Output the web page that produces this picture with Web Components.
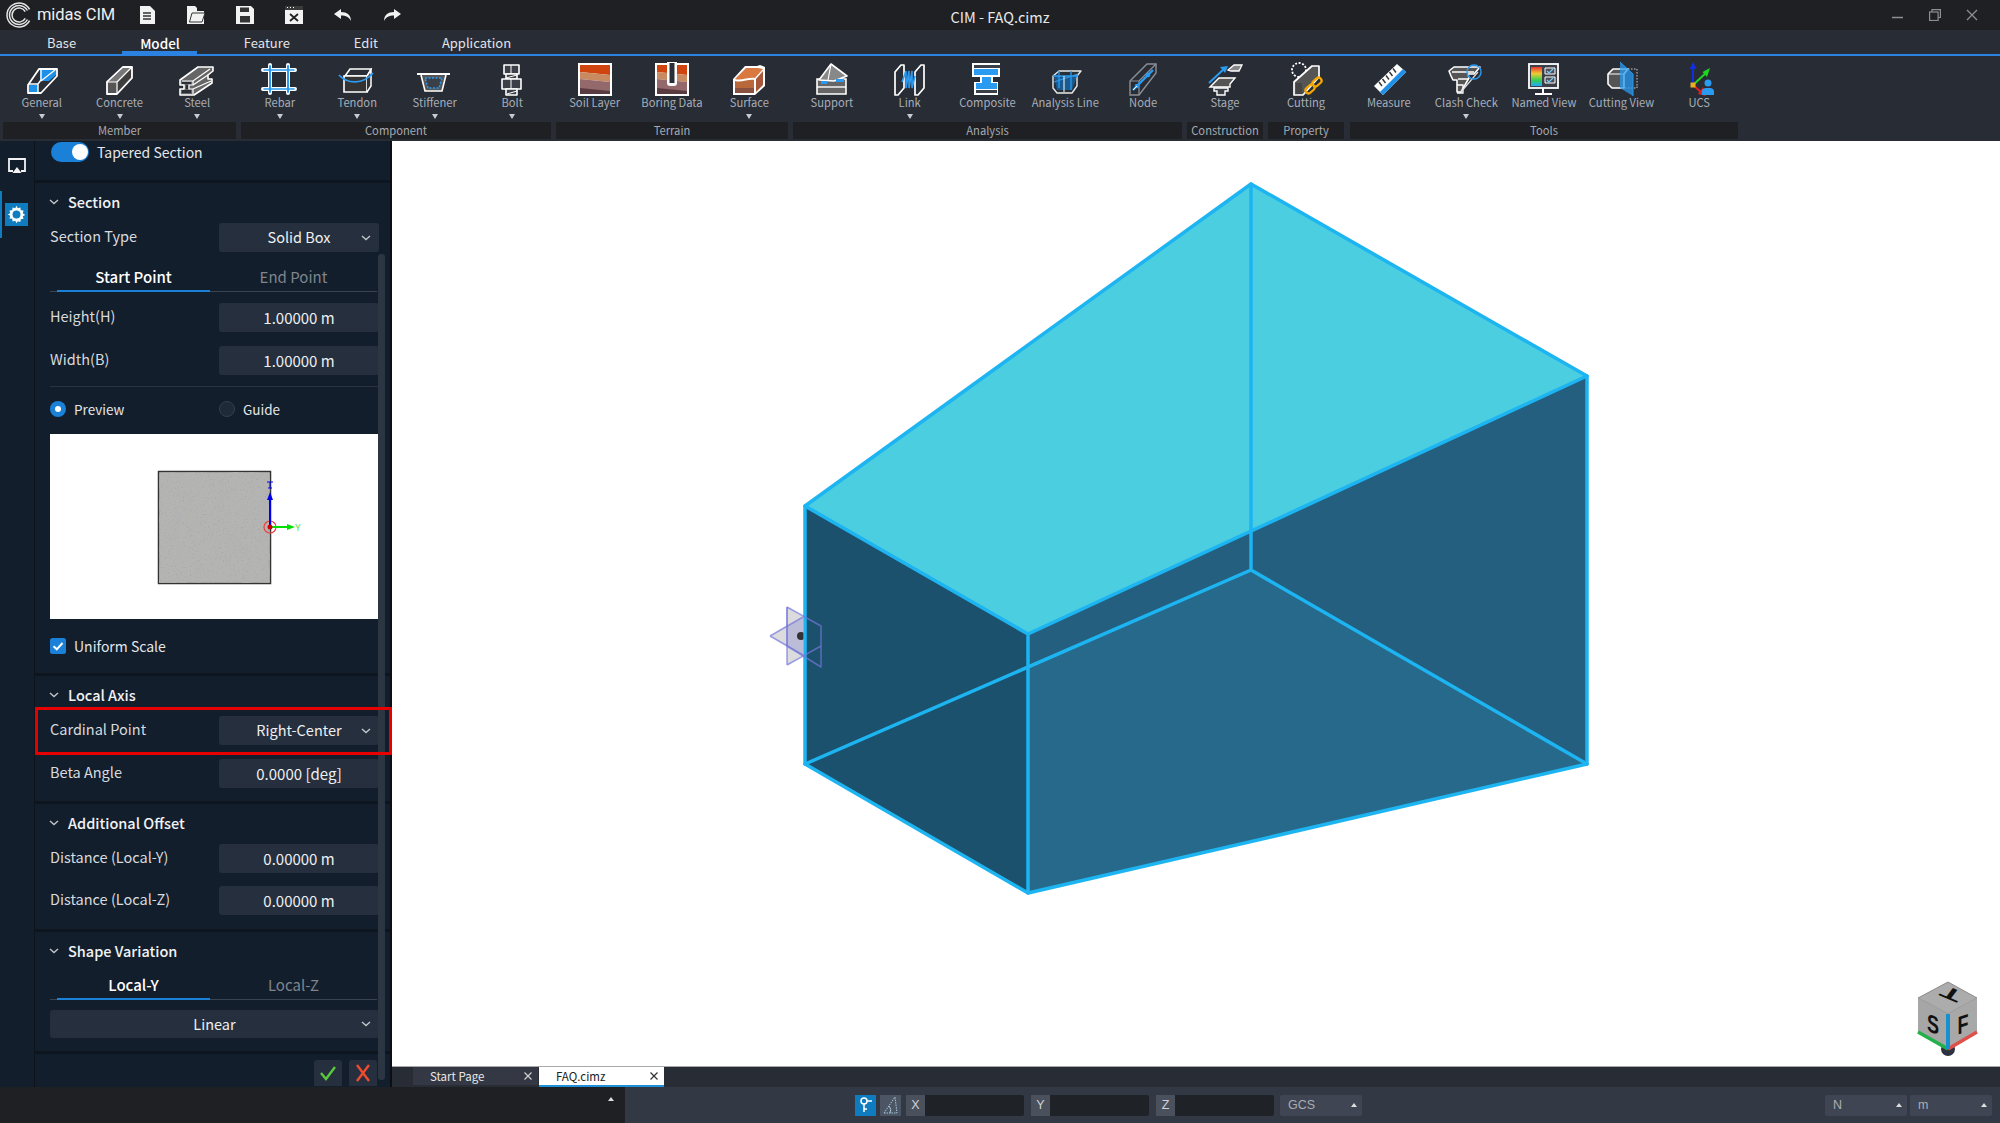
<!DOCTYPE html>
<html>
<head>
<meta charset="utf-8">
<title>midas CIM</title>
<style>
  html, body { margin: 0; padding: 0; background: #1e2024; }
  body { width: 2000px; height: 1123px; overflow: hidden; display: flex; flex-direction: column;
         font-family: "Noto Sans CJK KR", "Noto Sans", sans-serif; color: #e6e8ea; }
  #main { display: flex; height: 946px; }
  #work { flex: 1; display: flex; flex-direction: column; min-width: 0; }
</style>
</head>
<body>
<cim-titlebar title-text="CIM - FAQ.cimz"></cim-titlebar>
<cim-menu>
  <menu-tab>Base</menu-tab>
  <menu-tab active>Model</menu-tab>
  <menu-tab>Feature</menu-tab>
  <menu-tab>Edit</menu-tab>
  <menu-tab>Application</menu-tab>
</cim-menu>
<cim-ribbon>
  <rib-group label="Member" style="margin-left:3px;width:233px">
    <rib-item label="General" icon="general" drop></rib-item>
    <rib-item label="Concrete" icon="concrete" drop></rib-item>
    <rib-item label="Steel" icon="steel" drop></rib-item>
  </rib-group>
  <rib-group label="Component" style="width:310px">
    <rib-item label="Rebar" icon="rebar" drop></rib-item>
    <rib-item label="Tendon" icon="tendon" drop></rib-item>
    <rib-item label="Stiffener" icon="stiffener" drop></rib-item>
    <rib-item label="Bolt" icon="bolt" drop></rib-item>
  </rib-group>
  <rib-group label="Terrain" style="width:232px">
    <rib-item label="Soil Layer" icon="soil"></rib-item>
    <rib-item label="Boring Data" icon="boring"></rib-item>
    <rib-item label="Surface" icon="surface" drop></rib-item>
  </rib-group>
  <rib-group label="Analysis" style="width:389px">
    <rib-item label="Support" icon="support"></rib-item>
    <rib-item label="Link" icon="link" drop></rib-item>
    <rib-item label="Composite" icon="composite"></rib-item>
    <rib-item label="Analysis Line" icon="analysis"></rib-item>
    <rib-item label="Node" icon="node"></rib-item>
  </rib-group>
  <rib-group label="Construction" style="width:76px">
    <rib-item label="Stage" icon="stage"></rib-item>
  </rib-group>
  <rib-group label="Property" style="width:76px">
    <rib-item label="Cutting" icon="cutting"></rib-item>
  </rib-group>
  <rib-group label="Tools" style="width:388px;margin-left:1px">
    <rib-item label="Measure" icon="measure"></rib-item>
    <rib-item label="Clash Check" icon="clash" drop></rib-item>
    <rib-item label="Named View" icon="named"></rib-item>
    <rib-item label="Cutting View" icon="cutview"></rib-item>
    <rib-item label="UCS" icon="ucs"></rib-item>
  </rib-group>
</cim-ribbon>
<div id="main">
  <cim-rail></cim-rail>
  <cim-panel>
    <prop-toggle label="Tapered Section"></prop-toggle>
    <prop-section header="Section" pad="13">
      <prop-select label="Section Type" value="Solid Box"></prop-select>
      <prop-tabs a="Start Point" b="End Point" style="margin-top:11px"></prop-tabs>
      <prop-field label="Height(H)" value="1.00000 m" style="margin-top:11px"></prop-field>
      <prop-field label="Width(B)" value="1.00000 m" style="margin-top:14px"></prop-field>
      <prop-rule></prop-rule>
      <prop-radios></prop-radios>
      <section-preview></section-preview>
      <prop-check label="Uniform Scale"></prop-check>
    </prop-section>
    <prop-section header="Local Axis" pad="13">
      <prop-select label="Cardinal Point" value="Right-Center"></prop-select>
      <prop-field label="Beta Angle" value="0.0000 [deg]" style="margin-top:14px"></prop-field>
    </prop-section>
    <prop-section header="Additional Offset" pad="14">
      <prop-field label="Distance (Local-Y)" value="0.00000 m"></prop-field>
      <prop-field label="Distance (Local-Z)" value="0.00000 m" style="margin-top:13px"></prop-field>
    </prop-section>
    <prop-section header="Shape Variation" pad="13" nogap>
      <prop-tabs a="Local-Y" b="Local-Z" style="margin-top:8px"></prop-tabs>
      <prop-select value="Linear" style="margin-top:10px"></prop-select>
    </prop-section>
    <prop-actions></prop-actions>
  </cim-panel>
  <div id="work">
    <cim-viewport><view-cube></view-cube></cim-viewport>
    <cim-doctabs>
      <doc-tab>Start Page</doc-tab>
      <doc-tab active>FAQ.cimz</doc-tab>
    </cim-doctabs>
  </div>
</div>
<cim-status></cim-status>

<script>
const FONT = '"Noto Sans CJK KR", "Noto Sans", sans-serif';
const CHEVRON = '<svg width="10" height="6" viewBox="0 0 10 6"><path d="M1 1l4 3.6L9 1" fill="none" stroke="#c4c8cc" stroke-width="1.3"/></svg>';

// ribbon icons, 36x36, centred on the item
const ICONS = {
  general: `<path d="M4 23L15 7H33V14L17 31H4Z" fill="#2a2e37" stroke="#fff" stroke-width="1.8" stroke-linejoin="round"/>
    <path d="M16 8H32V13L25 19H16Z" fill="#1e90e8"/><path d="M31 8L17 19" stroke="#fff" stroke-width="1.2"/>
    <rect x="5" y="23" width="9" height="7" fill="#1e90e8"/>
    <path d="M4 22H14V31M14 22L17 18V8" fill="none" stroke="#fff" stroke-width="1.4"/>`,
  concrete: `<path d="M5 20L21 5H30V16L15 32H5Z" fill="#555" stroke="#fff" stroke-width="1.8" stroke-linejoin="round"/>
    <path d="M6 20L21 6H29L15 20Z" fill="#777"/><path d="M15 21L29 7V15L15 30Z" fill="#3d3d3d"/>
    <path d="M5 20H15V32M15 20L30 5" fill="none" stroke="#fff" stroke-width="1.2"/>`,
  steel: `<path d="M1 18L19 5H34V9L29 13V17L33 17V21L15 33H1V27H5V23H1Z" fill="#666" stroke="#fff" stroke-width="1.6" stroke-linejoin="round"/>
    <path d="M3 19H14L31 7M14 19V23H10V27H14V32M14 23L29 13M14 27L32 19" fill="none" stroke="#fff" stroke-width="1.2"/>
    <rect x="3" y="20" width="9" height="2" fill="#2a2e37"/><rect x="7" y="23" width="2" height="4" fill="#2a2e37"/><rect x="3" y="28" width="9" height="3" fill="#2a2e37"/>`,
  rebar: `<g fill="none" stroke-linecap="round"><path d="M8 3V31M26 3V31M1 8H33M1 27H33" stroke="#fff" stroke-width="4"/>
    <path d="M8 4V30M26 4V30" stroke="#2a9bf0" stroke-width="2"/><path d="M2 8H32M2 27H32" stroke="#2a9bf0" stroke-width="1.6"/></g>`,
  tendon: `<path d="M6 14L11 7H32L28 14Z" fill="#2a2e37" stroke="#fff" stroke-width="1.5"/>
    <path d="M5 14H28V30H5Z" fill="#333" stroke="#fff" stroke-width="1.6"/><path d="M28 14L32 8V24L28 30" fill="#333" stroke="#fff" stroke-width="1.5"/>
    <path d="M0 13C8 22 24 23 34 11" fill="none" stroke="#2a9bf0" stroke-width="1.8"/>`,
  stiffener: `<path d="M0 12H33" stroke="#fff" stroke-width="2"/><path d="M4 13L8 29H25L29 13" fill="#555" stroke="#fff" stroke-width="1.6"/>
    <path d="M8 16H25L22 26H11Z" fill="#3a3f48" stroke="#2a9bf0" stroke-width="1.5" stroke-dasharray="2 1.5"/>`,
  bolt: `<g fill="#3b3f47" stroke="#fff" stroke-width="1.6" stroke-linejoin="round"><path d="M10 3H25V12H10Z"/><path d="M12 12H23V17H12Z"/><path d="M8 17H27V27H8Z"/><path d="M12 27H23V33H12Z"/></g>
    <path d="M17 3V12M12 16L23 13M13 32L23 29" stroke="#fff" stroke-width="1"/><path d="M17 17V27" stroke="#fff" stroke-width="1"/>`,
  soil: `<rect x="1" y="1" width="34" height="33" fill="#fff"/><path d="M3 3H33V13L3 10Z" fill="#d0450f"/><path d="M3 10L33 13V20L3 17Z" fill="#c98a5f"/>
    <path d="M3 17L33 20V30L3 27Z" fill="#94696b"/><path d="M3 26L33 29V32H3Z" fill="#5b3b42"/>`,
  boring: `<rect x="1" y="1" width="34" height="33" fill="#fff"/><path d="M3 3H33V13L3 10Z" fill="#d0450f"/><path d="M3 10L33 13V20L3 17Z" fill="#c98a5f"/>
    <path d="M3 17L33 20V30L3 27Z" fill="#94696b"/><path d="M3 26L33 29V32H3Z" fill="#5b3b42"/>
    <path d="M13 0H23V21a3 3 0 0 1-3 3H16a3 3 0 0 1-3-3Z" fill="#fff"/><path d="M15.500 1H20.500V21H15.500Z" fill="#2a2e37"/>`,
  surface: `<path d="M2 17L14 4H26L29 3L34 5V24L24 33H2Z" fill="#fff"/>
    <path d="M4 17L15 6H27L32 7L24 16C18 15 10 19 4 17Z" fill="#d9793f"/><path d="M4 19C10 21 18 17 23 18V31H4Z" fill="#b8683a"/>
    <path d="M25 17L32 9V23L25 30Z" fill="#a8583a"/><path d="M4 26H23V31H4Z" fill="#8a5040"/>`,
  support: `<path d="M3 18H32V33H3Z" fill="#666" stroke="#fff" stroke-width="1.6" transform="translate(0 -1)"/><path d="M3 25H32" stroke="#fff" stroke-width="1.4"/>
    <path d="M5 18L17 2 33 14 20 19Z" fill="#888" stroke="#fff" stroke-width="1.6" stroke-linejoin="round"/><path d="M17 2L14 18" stroke="#fff" stroke-width="1.2"/>
    <path d="M7 19H13V22H7ZM22 17H30V20H22Z" fill="#2a9bf0"/>`,
  link: `<g fill="#2a2e37" stroke="#fff" stroke-width="1.7" stroke-linejoin="round"><path d="M3 10L9 3H12V26L6 33H3Z"/><path d="M23 10L29 3H32V26L26 33H23Z"/></g>
    <path d="M10 20L14 9V26L17 9V26L20 9V26L23 14" fill="none" stroke="#2a9bf0" stroke-width="1.6"/>`,
  composite: `<path d="M3 1H31V15H24V20H29V33H5V20H11V15H3Z" fill="#fff"/><rect x="5" y="3" width="26" height="3" fill="#3a3f48"/><rect x="5" y="7" width="24" height="6" fill="#2a9bf0"/>
    <path d="M13 15H22V21H28V27H7V21H13Z" fill="#2a9bf0"/><rect x="7" y="28" width="21" height="3" fill="#3a3f48"/>`,
  analysis: `<path d="M6 14L12 9H34L30 14V24L25 31H10L6 26Z" fill="#2a3038" stroke="#e8e8e8" stroke-width="1.4" stroke-linejoin="round"/>
    <path d="M7 14H30L25 28H10Z" fill="#1565a8" opacity=".8"/><path d="M12 9V26M24 9V28M6 14H31M7 20L31 12" stroke="#2a9bf0" stroke-width="1.3" fill="none"/><path d="M17 14V30" stroke="#fff"/>`,
  node: `<path d="M5 19L22 2H31V11L14 33H5Z" fill="none" stroke="#8b8f96" stroke-width="1.4"/><path d="M5 19H14V33M14 19L31 2" fill="none" stroke="#8b8f96" stroke-width="1.2"/>
    <path d="M8 28L28 8" stroke="#2a9bf0" stroke-width="2.4"/><circle cx="12" cy="24" r="2.300" fill="#2a9bf0"/><circle cx="23" cy="13" r="2.300" fill="#2a9bf0"/><path d="M8 28L12 24" stroke="#fff"/>`,
  stage: `<path d="M21 8L27 3H35L32 9H24Z" fill="#888" stroke="#fff" stroke-width="1.3"/>
    <path d="M3 25L12 16H28L23 22V25Z" fill="#555" stroke="#fff" stroke-width="1.4"/><path d="M7 26H21V29H18V33H10V29H7Z" fill="#3a3f48" stroke="#fff" stroke-width="1.4"/>
    <path d="M2 21L18 6" stroke="#2a9bf0" stroke-width="2"/><path d="M13 5L21 4 18 11Z" fill="#2a9bf0"/>`,
  cutting: `<circle cx="11" cy="8" r="7" fill="none" stroke="#fff" stroke-width="1.8" stroke-dasharray="2 1.6"/>
    <path d="M6 20L24 4H31V15L15 33H6Z" fill="#555" stroke="#fff" stroke-width="1.7" stroke-linejoin="round"/><path d="M8 21H14V32H8Z" fill="#444"/>
    <g fill="none" stroke="#f5a800" stroke-width="2.200"><rect x="24" y="17" width="10" height="6" rx="3" transform="rotate(-40 29 20)"/><rect x="17" y="24" width="10" height="6" rx="3" transform="rotate(-40 22 27)"/></g>`,
  measure: `<path d="M3 24L26 2 35 10 12 33Z" fill="#fff"/><path d="M9 30L32 7 35 10 12 33Z" fill="#1e90e8"/>
    <path d="M8 20L11 24M11.500 17L14.500 21M15 13.500L18 17.500M18.500 10L21.500 14M22 6.500L25 10.500" stroke="#333" stroke-width="1.4"/>`,
  clash: `<path d="M1 9L6 5H32L26 12H20L21 16 13 30H9V18H5L3 14Z" fill="#555" stroke="#fff" stroke-width="1.6" stroke-linejoin="round"/>
    <path d="M4 10H26M10 17H20M9 23H15V31H9" fill="none" stroke="#fff" stroke-width="1.3"/><path d="M13 30L30 10" stroke="#ddd" stroke-width="1.2"/>
    <circle cx="26" cy="10" r="7" fill="none" stroke="#2a9bf0" stroke-width="1.4"/>`,
  named: `<rect x="3" y="2" width="29" height="24" fill="#3a3f48" stroke="#fff" stroke-width="1.8"/>
    <defs><linearGradient id="rb" x1="0" y1="0" x2="0" y2="1"><stop offset="0" stop-color="#e33"/><stop offset=".35" stop-color="#ec3"/><stop offset=".7" stop-color="#3c5"/><stop offset="1" stop-color="#2af"/></linearGradient></defs>
    <rect x="5" y="5" width="11" height="19" fill="url(#rb)"/><path d="M19 6h10v6H19zM19 15h10v6H19z" fill="#4c5058" stroke="#fff"/><path d="M21 9l2 2 4-4M21 18l2 2 4-4" fill="none" stroke="#7cf" stroke-width="1.2"/>
    <path d="M17 26V31M9 32H26" stroke="#fff" stroke-width="2"/>`,
  cutview: `<path d="M4 12L9 7H24L20 12V26H8L4 22Z" fill="#555" stroke="#fff" stroke-width="1.6" stroke-linejoin="round"/><path d="M4 12H20" stroke="#fff"/>
    <path d="M24 7H33V24" fill="none" stroke="#ccc" stroke-dasharray="1.500 1.500"/><path d="M21 26H33V24" fill="none" stroke="#ccc" stroke-dasharray="1.500 1.500"/>
    <path d="M16 0L29 12V34L16 26Z" fill="#2a9bf0" opacity=".75"/><path d="M16 0L29 12V34" fill="none" stroke="#2a9bf0"/>`,
  ucs: `<path d="M12 23V4" stroke="#1030e0" stroke-width="2"/><path d="M12 0L8.500 7H15.500Z" fill="#1030e0"/>
    <path d="M12 23L26 10" stroke="#1dd620" stroke-width="2"/><path d="M29 6L21.500 10 26 15Z" fill="#1dd620"/>
    <path d="M12 23L21 31" stroke="#e02020" stroke-width="2"/><path d="M25 34L17 32 22 25Z" fill="#e02020"/>
    <rect x="9.500" y="20.500" width="5" height="5" fill="#e8b020"/><circle cx="27" cy="21" r="3.500" fill="#2a9bf0"/><path d="M21 33V29a4 4 0 0 1 4-3H29a4 4 0 0 1 4 3V33Z" fill="#2a9bf0"/>`
};

class CimTitlebar extends HTMLElement {
  constructor() {
    super();
    this.attachShadow({ mode: "open" });
  }
  connectedCallback() {
    this.shadowRoot.innerHTML = `
      <style>
        :host { display: flex; align-items: center; height: 30px; background: #1e2024; position: relative; font-family: ${FONT}; color: #e8e8e8; flex: none; }
        .logo { margin-left: 6px; display: block; }
        .name { font: 400 16.500px/30px Roboto, sans-serif; margin-left: 5px; width: 78px; color: #eee; white-space: nowrap; letter-spacing: -.1px; }
        .tools { display: flex; margin-left: 24px; gap: 31px; align-items: center; }
        .title { text-align: center; font-size: 14.500px; line-height: 30px; position: absolute; left: 0; right: 0; top: 2px; }
        .win { margin-left: auto; display: flex; gap: 25px; padding-right: 22px; align-items: center; position: relative; }
      </style>
      <svg class="logo" width="26" height="26" viewBox="0 0 26 26" fill="none" stroke="#e4e4e4" stroke-width="1.500">
        <path d="M23.600 7.400A12 12 0 1 0 23.600 18.600"/><path d="M21.400 8.500A9.500 9.500 0 1 0 21.400 17.500"/><path d="M19.200 9.700A7 7 0 1 0 19.200 16.300"/>
      </svg>
      <span class="name">midas CIM</span>
      <div class="tools">
        <svg width="17" height="18" viewBox="0 0 17 18"><path d="M1 0H11L16 5V18H1Z" fill="#f2f2f2"/><path d="M4 7H12M4 10H12M4 13H12" stroke="#333" stroke-width="1.300"/></svg>
        <svg width="18" height="18" viewBox="0 0 18 18"><path d="M0 0H8L10 2V5H17V18H0Z" fill="#f2f2f2"/><path d="M2.500 16L5 7H18L15 16Z" fill="#f2f2f2" stroke="#333"/></svg>
        <svg width="18" height="18" viewBox="0 0 18 18"><path d="M0 0H15L18 3V18H0Z" fill="#f2f2f2"/><rect x="4" y="1.500" width="9" height="4.500" fill="#333"/><rect x="4" y="10" width="10" height="6.500" fill="#333"/></svg>
        <svg width="18" height="18" viewBox="0 0 18 18"><rect width="18" height="18" fill="#f2f2f2"/><rect width="18" height="4" fill="#3a3a3a"/><path d="M2 1.500h1M5 1.500h1M8 1.500h1" stroke="#fff"/><path d="M5 8L13 15M13 8L5 15" stroke="#222" stroke-width="1.800"/></svg>
        <svg width="18" height="12" viewBox="0 0 18 12"><path d="M7 0L0 5 7 10V6.500C12 6.500 15 8 17 12 17 6 13 3 7 3Z" fill="#f2f2f2"/></svg>
        <svg width="18" height="12" viewBox="0 0 18 12"><path d="M11 0L18 5 11 10V6.500C6 6.500 3 8 1 12 1 6 5 3 11 3Z" fill="#f2f2f2"/></svg>
      </div>
      <div class="title">${this.getAttribute("title-text")}</div>
      <div class="win">
        <svg width="12" height="12" viewBox="0 0 12 12"><path d="M0 8.500H11" stroke="#8d8f92" stroke-width="1.500"/></svg>
        <svg width="12" height="12" viewBox="0 0 12 12" fill="none" stroke="#8d8f92" stroke-width="1.200"><rect x=".6" y="3" width="8.500" height="8.500"/><path d="M3 3V.6H11.400V8.500H9"/></svg>
        <svg width="12" height="12" viewBox="0 0 12 12"><path d="M1 1L11 11M11 1L1 11" stroke="#8d8f92" stroke-width="1.300"/></svg>
      </div>`;
  }
}
customElements.define("cim-titlebar", CimTitlebar);

class CimMenu extends HTMLElement {
  constructor() {
    super();
    this.attachShadow({ mode: "open" }).innerHTML = `
      <style>
        :host { display: flex; height: 24px; background: #282c35; border-bottom: 2px solid #2b82e0; padding-left: 47px; gap: 64px; flex: none; }
      </style>
      <slot></slot>`;
  }
}
customElements.define("cim-menu", CimMenu);

class MenuTab extends HTMLElement {
  constructor() {
    super();
    this.attachShadow({ mode: "open" }).innerHTML = `
      <style>
        :host { display: block; position: relative; font: 400 13px/26px ${FONT}; color: #e2e4e8; }
        :host([active]) { font-weight: 500; color: #fff; font-size: 13.500px; }
        :host([active])::after { content: ""; position: absolute; left: -18px; right: -17px; bottom: 0; height: 3px; background: #2b82e0; }
      </style>
      <slot></slot>`;
  }
}
customElements.define("menu-tab", MenuTab);

class CimRibbon extends HTMLElement {
  constructor() {
    super();
    this.attachShadow({ mode: "open" }).innerHTML = `
      <style>
        :host { display: flex; height: 85px; background: #282c35; flex: none; gap: 5px; }
      </style>
      <slot></slot>`;
  }
}
customElements.define("cim-ribbon", CimRibbon);

class RibGroup extends HTMLElement {
  constructor() {
    super();
    this.attachShadow({ mode: "open" });
  }
  connectedCallback() {
    this.shadowRoot.innerHTML = `
      <style>
        :host { display: flex; flex-direction: column; flex: none; }
        .items { display: flex; height: 66px; }
        .label { height: 17px; background: #1e2024; color: #a6aab2; font: 400 11.200px/17px ${FONT}; text-align: center; }
      </style>
      <div class="items"><slot></slot></div>
      <div class="label">${this.getAttribute("label")}</div>`;
  }
}
customElements.define("rib-group", RibGroup);

class RibItem extends HTMLElement {
  constructor() {
    super();
    this.attachShadow({ mode: "open" });
  }
  connectedCallback() {
    const drop = this.hasAttribute("drop") ? '<i class="arrow"></i>' : "";
    this.shadowRoot.innerHTML = `
      <style>
        :host { display: flex; flex-direction: column; align-items: center; flex: 1 1 0; min-width: 0; padding-top: 6px; }
        svg { display: block; overflow: visible; }
        .label { font: 400 11.200px/14px ${FONT}; color: #a6aeb8; white-space: nowrap; margin-top: -3px; }
        .arrow { width: 0; height: 0; border: 3px solid transparent; border-top: 5px solid #c8ccd2; border-bottom: 0; margin-top: 5px; }
      </style>
      <svg width="36" height="36" viewBox="0 0 36 36">${ICONS[this.getAttribute("icon")]}</svg>
      <span class="label">${this.getAttribute("label")}</span>${drop}`;
  }
}
customElements.define("rib-item", RibItem);

class CimRail extends HTMLElement {
  constructor() {
    super();
    this.attachShadow({ mode: "open" }).innerHTML = `
      <style>
        :host { display: flex; flex-direction: column; width: 34px; background: #131e2c; border-right: 1px solid #0c131c; flex: none; }
        .b { height: 47px; display: flex; align-items: center; justify-content: center; box-sizing: border-box; }
        .b.first { height: 50px; }
        .b.on { border-left: 2px solid #0f7cbf; padding-right: 3px; }
        .gear { width: 23px; height: 23px; background: #0f7cbf; display: flex; align-items: center; justify-content: center; }
      </style>
      <div class="b first"><svg width="18" height="17" viewBox="0 0 18 17"><path d="M5 13H1V1H17V13H13" fill="none" stroke="#f2f2f2" stroke-width="1.800"/><path d="M9 9L13.500 15H4.500Z" fill="#f2f2f2"/></svg></div>
      <div class="b on"><div class="gear"><svg width="19" height="19" viewBox="0 0 24 24">
        <path d="M12 2l1.600 3.100 3.300-1 .5 3.500 3.500.5-1 3.300L23 13.500l-3.100 1.600 1 3.300-3.500.5-.5 3.500-3.300-1L12 24l-1.600-3.100-3.300 1-.5-3.500-3.500-.5 1-3.300L1 13l3.100-1.600-1-3.300 3.500-.5.5-3.500 3.300 1Z" transform="translate(0 -1)" fill="#fff"/>
        <circle cx="12" cy="12" r="5" fill="#0f7cbf"/></svg></div></div>`;
  }
}
customElements.define("cim-rail", CimRail);

class CimPanel extends HTMLElement {
  constructor() {
    super();
    this.attachShadow({ mode: "open" }).innerHTML = `
      <style>
        :host { display: flex; flex-direction: column; width: 355px; background: #131e2c; border-right: 2px solid #0a0f15; position: relative; flex: none; color: #e4e6ea; font-family: ${FONT}; }
        .bar { position: absolute; left: 343px; top: 113px; bottom: 7px; width: 7px; background: #2c3642; border-radius: 3px; }
        .mark { position: absolute; left: 0; top: 566px; width: 357px; height: 48px; box-sizing: border-box; border: 3px solid #e60000; }
      </style>
      <slot></slot>
      <div class="bar"></div>
      <div class="mark"></div>`;
  }
}
customElements.define("cim-panel", CimPanel);

class PropToggle extends HTMLElement {
  constructor() {
    super();
    this.attachShadow({ mode: "open" });
  }
  connectedCallback() {
    this.shadowRoot.innerHTML = `
      <style>
        :host { display: flex; align-items: flex-start; height: 39px; padding: 1px 0 0 16px; box-sizing: border-box; font-size: 14px; line-height: 20px; }
        .sw { width: 38px; height: 20px; border-radius: 10px; background: #1a80d8; position: relative; margin-right: 8px; }
        .sw i { position: absolute; right: 1px; top: 2px; width: 16px; height: 16px; border-radius: 50%; background: #fff; }
      </style>
      <div class="sw"><i></i></div><span>${this.getAttribute("label")}</span>`;
  }
}
customElements.define("prop-toggle", PropToggle);

class PropSection extends HTMLElement {
  constructor() {
    super();
    this.attachShadow({ mode: "open" });
  }
  connectedCallback() {
    const pad = this.getAttribute("pad");
    const gap = this.hasAttribute("nogap") ? 0 : 9;
    this.shadowRoot.innerHTML = `
      <style>
        :host { display: block; border-top: 3px solid #0d151f; padding: 7px 13px ${pad}px 15px; }
        .head { display: flex; align-items: center; height: 24px; margin-bottom: ${gap}px; font: 500 14.500px/24px ${FONT}; color: #f0f2f4; }
        svg { margin-right: 9px; margin-left: -1px; }
      </style>
      <div class="head">${CHEVRON}<span>${this.getAttribute("header")}</span></div>
      <slot></slot>`;
  }
}
customElements.define("prop-section", PropSection);

class PropField extends HTMLElement {
  constructor() {
    super();
    this.attachShadow({ mode: "open" });
  }
  connectedCallback() {
    this.shadowRoot.innerHTML = `
      <style>
        :host { display: grid; grid-template-columns: 169px 160px; height: 29px; align-items: center; font-size: 14.500px; }
        .l { color: #d8dade; margin-top: -4px; white-space: nowrap; }
        .v { height: 29px; background: #262f3d; border-radius: 3px; text-align: center; line-height: 29px; color: #eef0f2; font-size: 15px; }
      </style>
      <span class="l">${this.getAttribute("label")}</span>
      <div class="v">${this.getAttribute("value")}</div>`;
  }
}
customElements.define("prop-field", PropField);

class PropSelect extends HTMLElement {
  constructor() {
    super();
    this.attachShadow({ mode: "open" });
  }
  connectedCallback() {
    const label = this.getAttribute("label");
    this.shadowRoot.innerHTML = `
      <style>
        :host { display: grid; grid-template-columns: ${label ? "169px 160px" : "329px"}; height: ${label ? 29 : 28}px; align-items: center; font-size: 14.500px; }
        .l { color: #d8dade; margin-top: -4px; white-space: nowrap; }
        .v { display: grid; grid-template-columns: 1fr auto 1fr; align-items: center; height: 100%; background: #262f3d; border-radius: 3px; color: #eef0f2; line-height: 1; }
        .v svg { justify-self: end; margin-right: 8px; }
      </style>
      ${label ? `<span class="l">${label}</span>` : ""}
      <div class="v"><span></span><span>${this.getAttribute("value")}</span>${CHEVRON}</div>`;
  }
}
customElements.define("prop-select", PropSelect);

class PropTabs extends HTMLElement {
  constructor() {
    super();
    this.attachShadow({ mode: "open" });
  }
  connectedCallback() {
    this.shadowRoot.innerHTML = `
      <style>
        :host { display: grid; grid-template-columns: 153px 167px; padding-left: 7px; height: 29px; box-sizing: border-box; width: 327px; border-bottom: 1px solid #3a4450; font: 400 15px/28px ${FONT}; text-align: center; }
        .a { color: #fff; font-weight: 500; height: 29px; box-sizing: border-box; border-bottom: 2px solid #1a80d8; }
        .b { color: #7f858d; }
      </style>
      <div class="a">${this.getAttribute("a")}</div>
      <div class="b">${this.getAttribute("b")}</div>`;
  }
}
customElements.define("prop-tabs", PropTabs);

class PropRule extends HTMLElement {
  constructor() {
    super();
    this.attachShadow({ mode: "open" }).innerHTML = `
      <style>:host { display: block; height: 1px; margin-top: 11px; background: #2a3441; width: 329px; }</style>`;
  }
}
customElements.define("prop-rule", PropRule);

class PropRadios extends HTMLElement {
  constructor() {
    super();
    this.attachShadow({ mode: "open" }).innerHTML = `
      <style>
        :host { display: grid; grid-template-columns: 169px 160px; height: 24px; margin-top: 10px; font-size: 13.500px; align-items: center; line-height: 20px; }
        label { display: flex; align-items: center; gap: 8px; }
        i { width: 16px; height: 16px; border-radius: 50%; box-sizing: border-box; }
        .on { background: #1a80d8; display: flex; align-items: center; justify-content: center; }
        .on::after { content: ""; width: 6px; height: 6px; border-radius: 50%; background: #fff; }
        .off { background: #1f2a38; border: 1px solid #333f4e; }
      </style>
      <label><i class="on"></i>Preview</label>
      <label><i class="off"></i>Guide</label>`;
  }
}
customElements.define("prop-radios", PropRadios);

class SectionPreview extends HTMLElement {
  constructor() {
    super();
    this.attachShadow({ mode: "open" }).innerHTML = `
      <style>:host { display: block; width: 329px; height: 185px; margin-top: 13px; background: #fff; } svg { display: block; }</style>
      <svg width="329" height="185" viewBox="0 0 329 185">
        <defs>
          <filter id="c" x="0" y="0" width="100%" height="100%">
            <feTurbulence type="fractalNoise" baseFrequency=".09" numOctaves="5" seed="7"/>
            <feColorMatrix values="0 0 0 0 .45  0 0 0 0 .45  0 0 0 0 .45  2.200 2.200 0 0 -2"/>
            <feComposite in2="SourceGraphic" operator="over"/>
          </filter>
          <filter id="s" x="0" y="0" width="100%" height="100%">
            <feTurbulence type="fractalNoise" baseFrequency=".6" numOctaves="2" seed="12"/>
            <feColorMatrix values="0 0 0 0 .38  0 0 0 0 .38  0 0 0 0 .38  4 0 0 0 -2.400"/>
          </filter>
        </defs>
        <rect x="108.500" y="37.500" width="112" height="112" fill="#a9a9a8" stroke="#333" stroke-width="1.500"/>
        <rect x="109.500" y="38.500" width="110" height="110" fill="#b4b4b3" filter="url(#c)"/>
        <rect x="109.500" y="38.500" width="110" height="110" filter="url(#s)"/>
        <circle cx="220" cy="93" r="6" fill="none" stroke="#f04040" stroke-width="1.200"/>
        <path d="M220 92V66" stroke="#0000ee" stroke-width="2"/><path d="M220 58L217 66H223Z" fill="#0000ee"/><path d="M217 48H223M218 54H222M220 48V54" stroke="#0000ee" stroke-width="1"/>
        <path d="M221 93H238" stroke="#00e000" stroke-width="2"/><path d="M245 93L237 90V96Z" fill="#00e000"/>
        <circle cx="220" cy="93" r="2.500" fill="#d00000"/>
        <text x="245" y="97" font-family="Roboto, sans-serif" font-size="9.500" fill="#5fe35f">Y</text>
      </svg>`;
  }
}
customElements.define("section-preview", SectionPreview);

class PropCheck extends HTMLElement {
  constructor() {
    super();
    this.attachShadow({ mode: "open" });
  }
  connectedCallback() {
    this.shadowRoot.innerHTML = `
      <style>
        :host { display: flex; align-items: center; gap: 8px; height: 24px; margin: 15px 0 2px; font-size: 14px; line-height: 20px; }
        i { width: 16px; height: 16px; border-radius: 2.500px; background: #1a80d8; display: block; }
        svg { display: block; }
      </style>
      <i><svg width="16" height="16" viewBox="0 0 16 16"><path d="M3.500 8.200L6.800 11.300 12.500 5" fill="none" stroke="#fff" stroke-width="2"/></svg></i>
      <span>${this.getAttribute("label")}</span>`;
  }
}
customElements.define("prop-check", PropCheck);

class PropActions extends HTMLElement {
  constructor() {
    super();
    this.attachShadow({ mode: "open" }).innerHTML = `
      <style>
        :host { display: flex; justify-content: flex-end; gap: 7px; border-top: 3px solid #0d151f; padding: 6px 13px 0 0; flex: 1; }
        div { width: 28px; height: 26px; background: #262f3d; border-radius: 3px 3px 0 0; display: flex; align-items: center; justify-content: center; }
      </style>
      <div><svg width="18" height="16" viewBox="0 0 18 16"><path d="M2 8L7 14 16 2" fill="none" stroke="#5ac83c" stroke-width="2.400"/></svg></div>
      <div><svg width="16" height="18" viewBox="0 0 16 18"><path d="M2 1L14 17M14 1L2 17" stroke="#ef4b2f" stroke-width="2.400"/></svg></div>`;
  }
}
customElements.define("prop-actions", PropActions);

class CimViewport extends HTMLElement {
  constructor() {
    super();
    // drawn in page coordinates so the box corners can be read off the shot
    this.attachShadow({ mode: "open" }).innerHTML = `
      <style>
        :host { display: block; position: relative; height: 925px; background: #fff; overflow: hidden; }
        svg { display: block; }
      </style>
      <svg width="1608" height="925" viewBox="392 141 1608 925">
        <polygon points="787,607 803,617 803,655 787,665" fill="#dcdcde"/>
        <polygon points="770,636 787,626 787,646" fill="#dcdcde"/>
        <polygon points="787,626 803,617 803,655 787,646" fill="#bcbcd8"/>
        <polygon points="805,506 1028,634 1028,893 805,764" fill="#1b516c"/>
        <polygon points="1028,634 1587,376 1587,764 1028,893" fill="#27698a"/>
        <polygon points="1028,634 1251,531 1587,376 1587,764 1251,570 1028,667" fill="#245f7f"/>
        <polygon points="805,506 1251,184 1587,376 1028,634" fill="#4bcee0"/>
        <circle cx="801" cy="636" r="4" fill="#333"/>
        <g fill="none" stroke="#1db4f2" stroke-width="3.500" stroke-linejoin="round" stroke-linecap="round">
          <path d="M1251 184L805 506V764L1028 893L1587 764V376L1251 184Z"/>
          <path d="M805 506L1028 634L1587 376M1028 634V893"/>
          <path d="M1251 184V570M805 764L1251 570L1587 764"/>
        </g>
        <g stroke="#7378d8" stroke-opacity=".7" stroke-width="1.500" stroke-linejoin="round" fill="none">
          <path d="M787 607L821 626V667L787 646V607"/>
          <path d="M787 665L821 646M787 607V665"/>
          <path d="M770 636L803 617M770 636L803 655"/>
        </g>
      </svg>
      <slot></slot>`;
  }
}
customElements.define("cim-viewport", CimViewport);

class ViewCube extends HTMLElement {
  constructor() {
    super();
    this.attachShadow({ mode: "open" }).innerHTML = `
      <style>
        :host { position: absolute; right: 16px; bottom: 8px; width: 70px; height: 78px; display: block; }
        svg { display: block; overflow: visible; }
        text { font-family: "Liberation Sans", sans-serif; font-weight: 700; font-size: 24px; fill: #111; text-anchor: middle; }
      </style>
      <svg width="70" height="78" viewBox="1914 978 70 78">
        <circle cx="1948" cy="1047" r="7" fill="#2c3240"/>
        <polygon points="1948,980 1977,996 1948,1012 1918,996" fill="#acacac" stroke="#8a8a8a"/>
        <polygon points="1918,996 1948,1012 1948,1047 1918,1030" fill="#a6a6a6"/>
        <polygon points="1977,996 1948,1012 1948,1047 1977,1030" fill="#a8a8a8"/>
        <path d="M1918 1030L1948 1047" stroke="#22b04a" stroke-width="3.500"/>
        <path d="M1977 1030L1948 1047" stroke="#e0504a" stroke-width="3.500"/>
        <path d="M1948 1012V1047" stroke="#1591cf" stroke-width="4"/>
        <text transform="translate(1955,987) matrix(1.300,.55,.45,-.6,0,0)">T</text>
        <text transform="translate(1933,1031) skewY(18) scale(.75,1.05)">S</text>
        <text transform="translate(1963,1031) skewY(-18) scale(.75,1.05)">F</text>
      </svg>`;
  }
}
customElements.define("view-cube", ViewCube);

class CimDoctabs extends HTMLElement {
  constructor() {
    super();
    this.attachShadow({ mode: "open" }).innerHTML = `
      <style>
        :host { display: flex; height: 20px; padding-left: 21px; background: #282c35; border-top: 1px solid #a8a8a8; gap: 1px; }
      </style>
      <slot></slot>`;
  }
}
customElements.define("cim-doctabs", CimDoctabs);

class DocTab extends HTMLElement {
  constructor() {
    super();
    this.attachShadow({ mode: "open" }).innerHTML = `
      <style>
        :host { display: flex; align-items: center; justify-content: space-between; width: 125px; height: 18px; box-sizing: border-box; padding: 0 6px 0 17px;
                background: #333844; color: #e8e8e8; font: 400 11.500px/18px ${FONT}; }
        :host([active]) { background: #fff; color: #222; height: 20px; border-bottom: 2px solid #1f8fd8; }
        svg { stroke: #d0d0d0; } :host([active]) svg { stroke: #333; }
      </style>
      <slot></slot>
      <svg width="8" height="8" viewBox="0 0 8 8"><path d="M.5 .5L7.500 7.500M7.500 .5L.5 7.500" stroke-width="1.200"/></svg>`;
  }
}
customElements.define("doc-tab", DocTab);

class CimStatus extends HTMLElement {
  constructor() {
    super();
    this.attachShadow({ mode: "open" }).innerHTML = `
      <style>
        :host { display: flex; height: 36px; background: #333944; flex: none; font: 400 12.500px/21px "Liberation Sans", sans-serif; color: #a9adb4; }
        .left { width: 625px; background: #1e2024; display: flex; justify-content: flex-end; padding: 10px 11px 0 0; box-sizing: border-box; flex: none; }
        .tri { width: 0; height: 0; border: 3px solid transparent; border-bottom: 4px solid #ddd; border-top: 0; }
        .right { flex: 1; display: flex; align-items: center; padding-left: 230px; }
        .btn { width: 21px; height: 21px; display: flex; align-items: center; justify-content: center; }
        .snap { background: #0f7cbf; } .ang { background: #4b5563; margin-left: 4px; }
        .lab { width: 19px; height: 21px; background: #4a505c; text-align: center; color: #d0d3d8; }
        .inp { width: 99px; height: 21px; background: #1f2328; margin-right: 7px; border-radius: 0 2px 2px 0; }
        .x { margin-left: 5px; }
        .drop { width: 82px; height: 21px; background: #3f4552; border-radius: 2px; display: flex; align-items: center; justify-content: space-between; padding: 0 5px 0 8px; box-sizing: border-box; }
        .unit { margin-left: auto; display: flex; gap: 3px; padding-right: 8px; }
      </style>
      <div class="left"><i class="tri"></i></div>
      <div class="right">
        <div class="btn snap"><svg width="14" height="18" viewBox="0 0 14 18" fill="none" stroke="#fff" stroke-width="1.500"><circle cx="5" cy="5" r="3"/><path d="M5 8V16M8 5H13M5 13H8"/></svg></div>
        <div class="btn ang"><svg width="15" height="18" viewBox="0 0 15 18" fill="none" stroke="#a9c6de"><path d="M1 17H14L12 1Z" stroke-dasharray="1.500 1"/><path d="M7 17A6 6 0 0 0 6 10"/></svg></div>
        <div class="lab x">X</div><div class="inp"></div>
        <div class="lab">Y</div><div class="inp"></div>
        <div class="lab">Z</div><div class="inp" style="margin-right:6px"></div>
        <div class="drop"><span>GCS</span><i class="tri"></i></div>
        <div class="unit">
          <div class="drop"><span>N</span><i class="tri"></i></div>
          <div class="drop"><span>m</span><i class="tri"></i></div>
        </div>
      </div>`;
  }
}
customElements.define("cim-status", CimStatus);
</script>
</body>
</html>
